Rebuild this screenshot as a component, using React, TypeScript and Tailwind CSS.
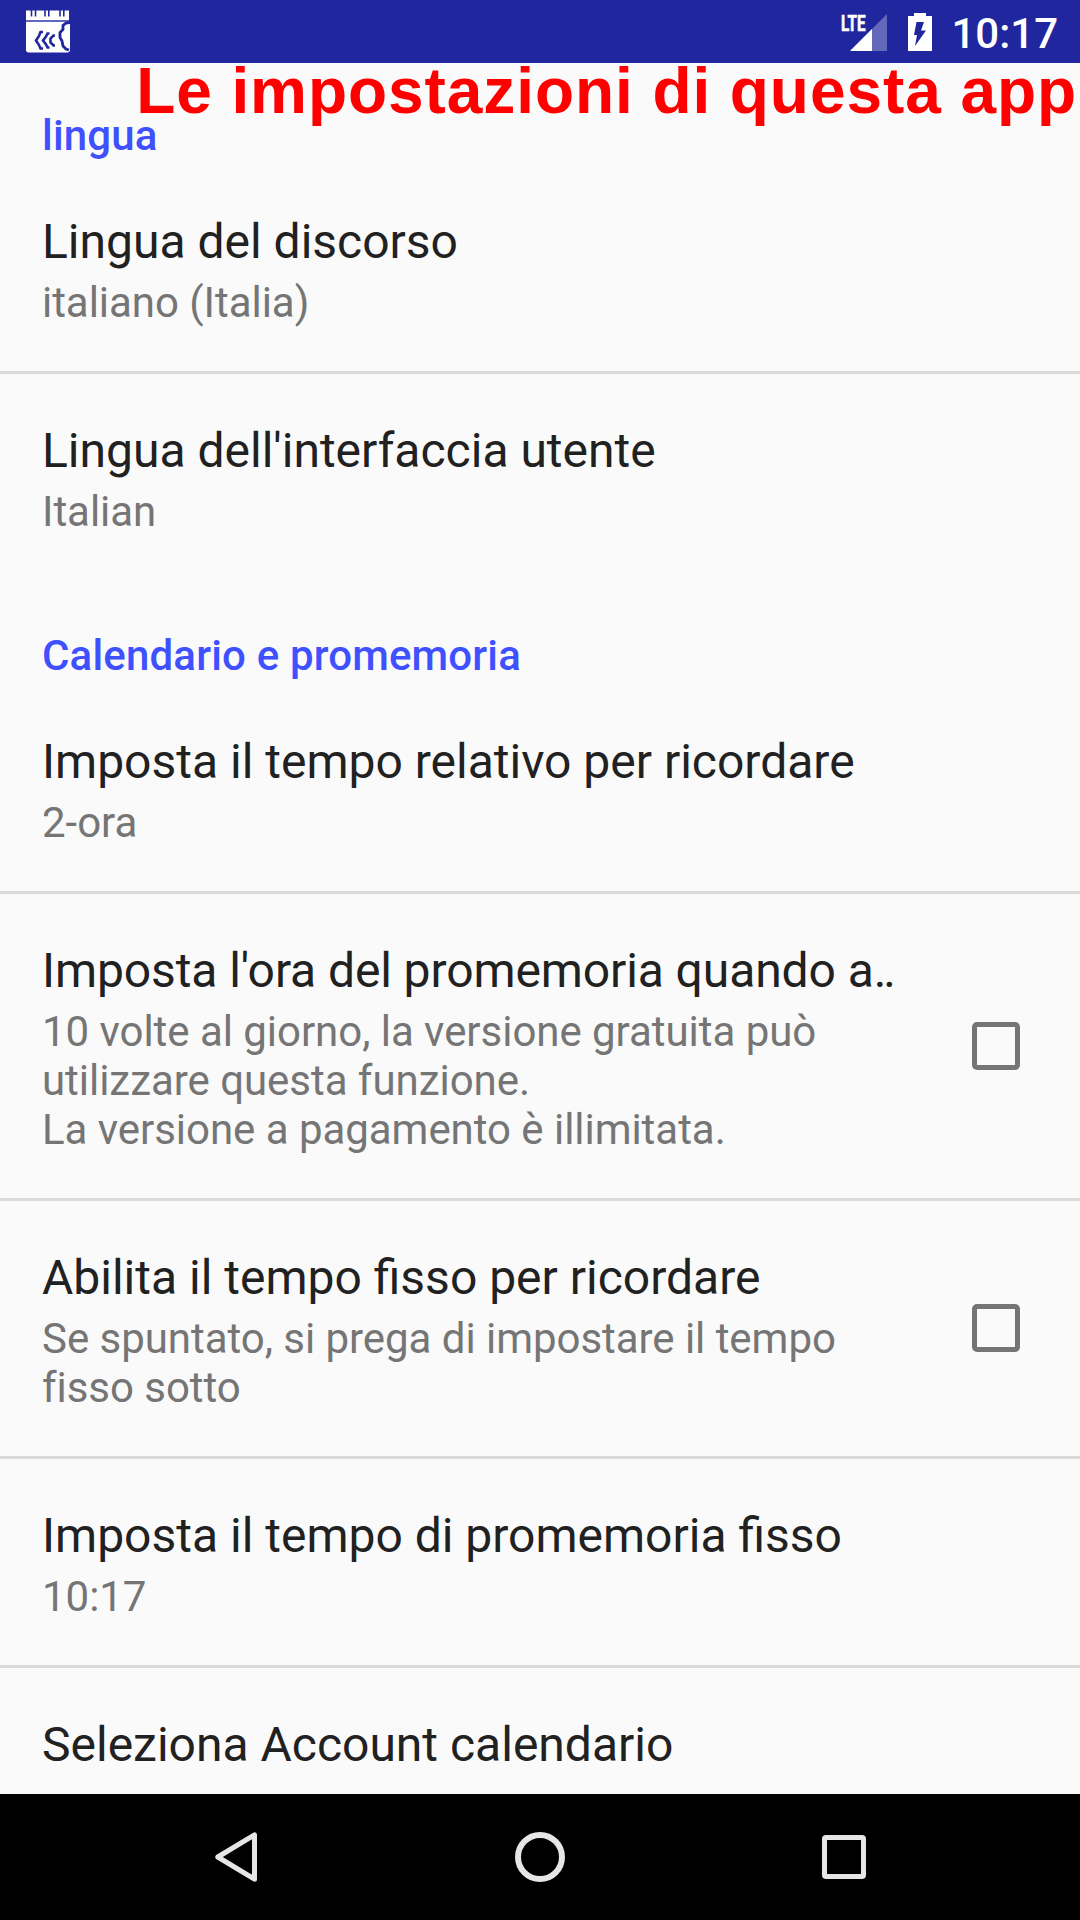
import React from 'react';

interface PreferenceProps {
  title: React.ReactNode;
  summary?: string[];
  checkbox?: boolean;
  divider?: boolean;
  className: string;
}

const Preference: React.FC<PreferenceProps> = ({ title, summary = [], checkbox, divider, className }) => (
  <div
    className={`flex shrink-0 justify-between pl-[42px] pr-[60px] ${
      divider ? 'border-b-3 border-[#dadada]' : ''
    } ${className}`}
  >
    <div className="whitespace-nowrap">
      <div className="mb-2 text-[48px] leading-[56px] text-[#212121]">{title}</div>
      {summary.map((line) => (
        <div key={line} className="text-[42px] leading-[49px] tracking-[-0.04px] text-[#757575]">
          {line}
        </div>
      ))}
    </div>
    {checkbox && <div className="mb-[50px] h-12 w-12 self-center rounded-[5px] border-5 border-[#757575]"></div>}
  </div>
);

const CategoryTitle: React.FC<{ children: React.ReactNode }> = ({ children }) => (
  <h2 className="h-[114px] shrink-0 pl-[42px] pt-12 text-[42px] font-medium leading-[50px] tracking-[0.17px] text-[#3f51ff]">
    {children}
  </h2>
);

const AppIcon: React.FC = () => (
  <svg width="44" height="44" viewBox="0 0 44 44" fill="none">
    <path d="M0 .5h43V10H0zM0 12h44v29l-2 1.500H2L0 41z" fill="#fff" />
    <path d="M0 11h43" stroke="#fff" strokeOpacity="0.3" strokeWidth="2" />
    <path d="M5.500 0v6.500M9.500 0v6.500M19 0v6.500M22.800 0v6.500M34 0v6.500M37.800 0v6.500" stroke="#20279e" strokeWidth="1.600" />
    <path
      d="M17 22h-2.500l-1.500 4-3 4.500 3 4.500 1.500 3.500H17M23.500 23.500h-2l-1.500 3-3 4 3 4 1.500 3h2M29 25.500h-1.500l-3 3v4l3 3H29"
      stroke="#20279e"
      strokeWidth="2.600"
    />
    <path d="M44 12.500l-4 .5-3 2.500v4l-3 3v5l2 3.500 1 5 3 3 3 1" stroke="#20279e" strokeWidth="2.800" />
  </svg>
);

const SignalIcon: React.FC = () => (
  <svg width="46" height="37" viewBox="0 0 46 37" className="overflow-visible">
    <path d="M46 0v37H9z" fill="#fff" fillOpacity="0.3" />
    <path d="M31 15v22H9z" fill="#fff" />
    <text
      x="0"
      y="16.500"
      fill="#fff"
      stroke="#fff"
      strokeWidth="0.600"
      fontFamily="Roboto, sans-serif"
      fontSize="22"
      fontWeight="700"
      textLength="24.500"
      lengthAdjust="spacingAndGlyphs"
    >
      LTE
    </text>
  </svg>
);

const BatteryIcon: React.FC = () => (
  <svg width="24" height="38" viewBox="0 0 24 38">
    <path d="M6 0h12v3h6v35H0V3h6z" fill="#fff" />
    <path d="M8.500 9H16l-3 8.500h5L7 33l2-11H6z" fill="#20279e" />
  </svg>
);

const App: React.FC = () => {
  return (
    <div className="relative flex h-[1920px] w-[1080px] flex-col overflow-hidden bg-[#fafafa] font-[Roboto,sans-serif]">
      {/* Status bar */}
      <header className="flex h-[63px] shrink-0 items-center justify-between bg-[#20279e] pl-[26px] pr-[22px] pt-px text-white">
        <AppIcon />
        <div className="flex items-center">
          <SignalIcon />
          <div className="ml-[21px] mr-[19px]">
            <BatteryIcon />
          </div>
          <span className="pt-1 text-[42px] font-medium leading-[50px]">10:17</span>
        </div>
      </header>

      <main className="flex min-h-0 flex-1 flex-col overflow-hidden">
        <CategoryTitle>lingua</CategoryTitle>
        <Preference title="Lingua del discorso" summary={['italiano (Italia)']} divider className="h-[197px] pt-[37px]" />
        <Preference title="Lingua dell'interfaccia utente" summary={['Italian']} className="h-[209px] pt-[49px]" />
        <CategoryTitle>Calendario e promemoria</CategoryTitle>
        <Preference title="Imposta il tempo relativo per ricordare" summary={['2-ora']} divider className="h-[197px] pt-[37px]" />
        <Preference
          title={
            <span className="tracking-[-0.1px]">
              Imposta l'ora del promemoria quando a<span className="tracking-[-3px]">..</span>
            </span>
          }
          summary={['10 volte al giorno, la versione gratuita può', 'utilizzare questa funzione.', 'La versione a pagamento è illimitata.']}
          checkbox
          divider
          className="h-[307px] pt-[49px]"
        />
        <Preference
          title="Abilita il tempo fisso per ricordare"
          summary={['Se spuntato, si prega di impostare il tempo', 'fisso sotto']}
          checkbox
          divider
          className="h-[258px] pt-[49px]"
        />
        <Preference title="Imposta il tempo di promemoria fisso" summary={['10:17']} divider className="h-[209px] pt-[49px]" />
        <Preference title="Seleziona Account calendario" className="h-[156px] pt-[49px]" />
      </main>

      {/* Navigation bar */}
      <nav className="flex h-[126px] shrink-0 items-center justify-between bg-black pl-[215px] pr-[214px]">
        <svg width="42" height="50" viewBox="0 0 42 50" fill="none">
          <path d="M39.500 2.800v44.400L2.800 25z" stroke="#e6e6e6" strokeWidth="5" strokeLinejoin="round" />
        </svg>
        <div className="h-[50px] w-[50px] rounded-full border-6 border-[#e6e6e6]"></div>
        <div className="h-11 w-11 rounded-[4px] border-5 border-[#e6e6e6]"></div>
      </nav>

      {/* Caption drawn over the screen */}
      <div className="absolute right-[3px] top-[56px] whitespace-nowrap font-['Liberation_Sans',sans-serif] text-[64px] font-bold leading-[70px] tracking-[0.93px] text-[#ff0000]">
        Le impostazioni di questa app
      </div>
    </div>
  );
};

export default App;
